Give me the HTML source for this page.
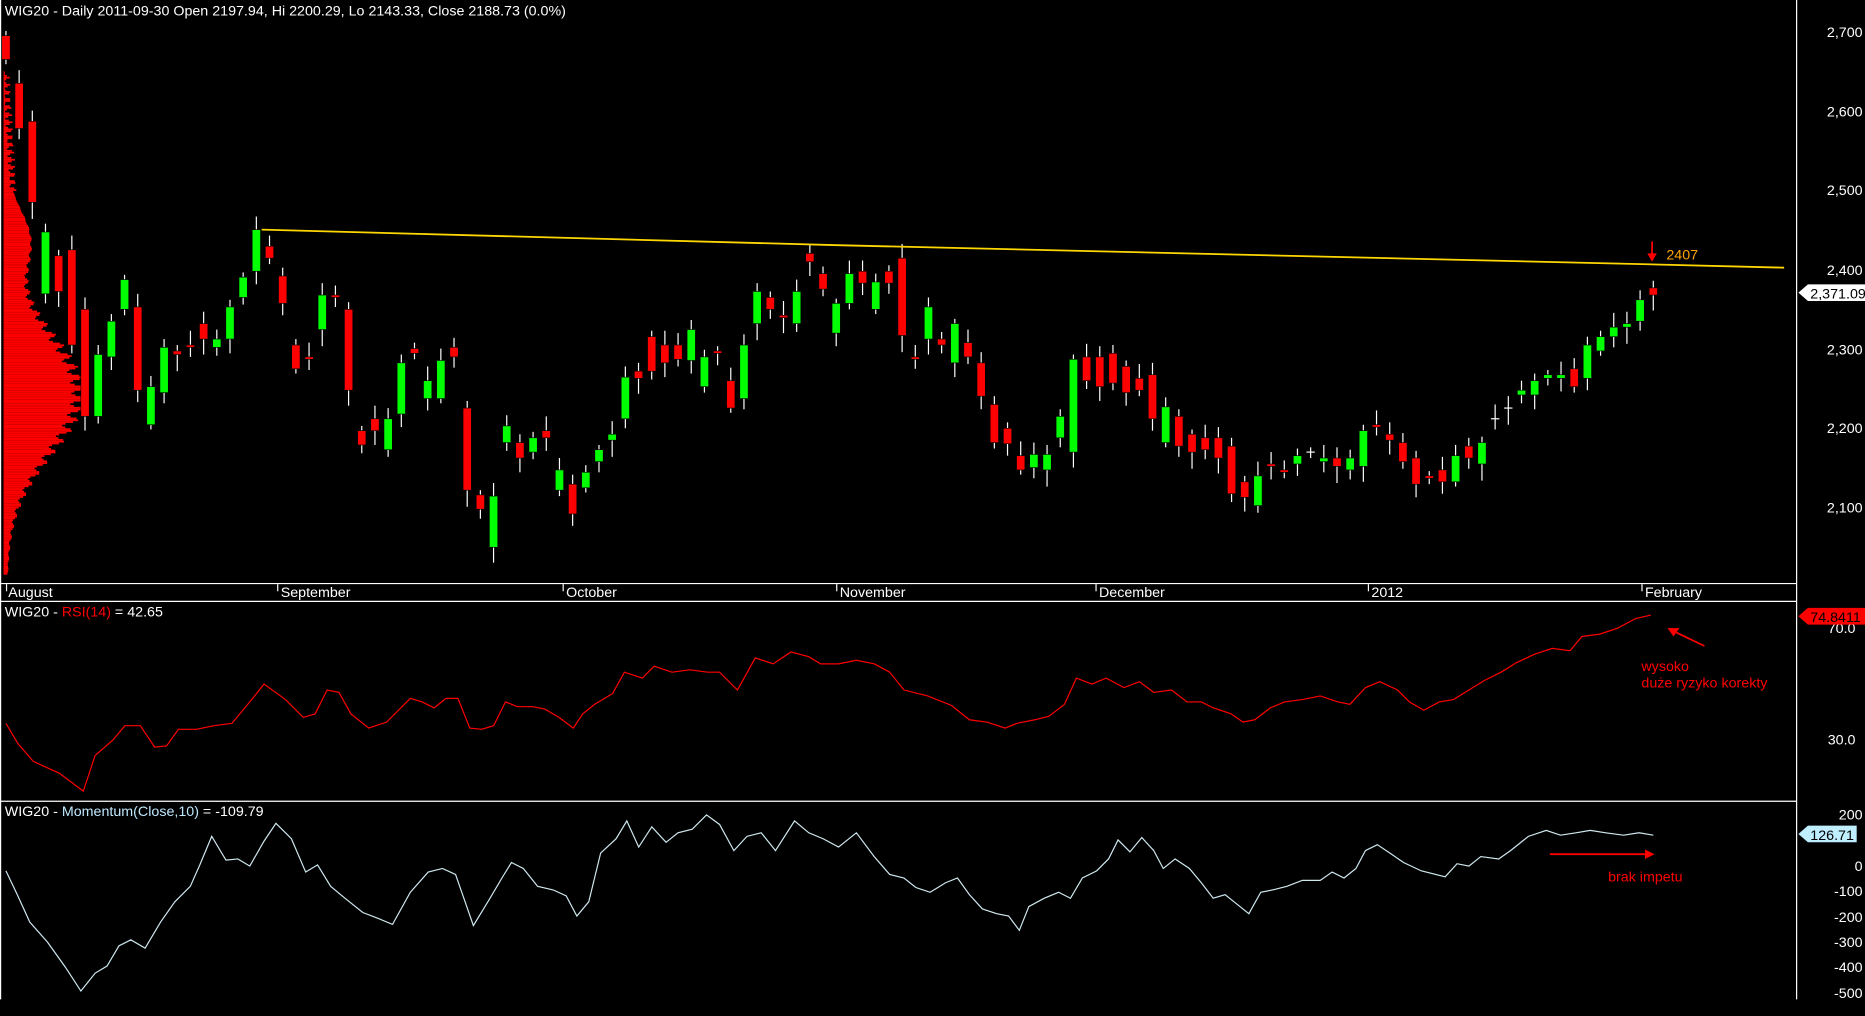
<!DOCTYPE html>
<html><head><meta charset="utf-8"><style>
html,body{margin:0;padding:0;background:#000;overflow:hidden}
svg{display:block}
text{font-family:"Liberation Sans",Arial,sans-serif;font-size:12px}
</style></head><body>
<svg id="s" width="1865" height="1016" viewBox="0 0 1568 854" preserveAspectRatio="none" xmlns="http://www.w3.org/2000/svg">
<rect width="1568" height="854" fill="#000"/>
<g id="vp"></g>
<g id="cd"></g>
<!-- frames -->
<g stroke="#fff" stroke-width="1" fill="none">
<line x1="0.5" y1="0" x2="0.5" y2="840"/>
<line x1="1510.5" y1="0" x2="1510.5" y2="840"/>
<line x1="0" y1="490.5" x2="1510" y2="490.5"/>
<line x1="0" y1="505.5" x2="1510" y2="505.5"/>
<line x1="0" y1="673.5" x2="1510" y2="673.5"/>
<line x1="5.5" y1="491" x2="5.5" y2="497"/>
<line x1="233.5" y1="491" x2="233.5" y2="497"/>
<line x1="473.5" y1="491" x2="473.5" y2="497"/>
<line x1="703.5" y1="491" x2="703.5" y2="497"/>
<line x1="921.5" y1="491" x2="921.5" y2="497"/>
<line x1="1150.5" y1="491" x2="1150.5" y2="497"/>
<line x1="1380.5" y1="491" x2="1380.5" y2="497"/>
</g>
<g fill="#fff">
<text x="7" y="502">August</text>
<text x="236" y="502">September</text>
<text x="476" y="502">October</text>
<text x="706" y="502">November</text>
<text x="924" y="502">December</text>
<text x="1153" y="502">2012</text>
<text x="1383" y="502">February</text>
<text x="4" y="13">WIG20 - Daily 2011-09-30 Open 2197.94, Hi 2200.29, Lo 2143.33, Close 2188.73 (0.0%)</text>
<text x="4" y="518">WIG20 - <tspan fill="#f00">RSI(14)</tspan> = 42.65</text>
<text x="4" y="686">WIG20 - <tspan fill="#bfe8ff">Momentum(Close,10)</tspan> = -109.79</text>
</g>
<g fill="#fff" text-anchor="end">
<text x="1566" y="31">2,700</text>
<text x="1566" y="98">2,600</text>
<text x="1566" y="164">2,500</text>
<text x="1566" y="231">2,400</text>
<text x="1566" y="298">2,300</text>
<text x="1566" y="364">2,200</text>
<text x="1566" y="431">2,100</text>
<text x="1560" y="532">70.0</text>
<text x="1560" y="626">30.0</text>
<text x="1566" y="689">200</text>
<text x="1566" y="732">0</text>
<text x="1566" y="753">-100</text>
<text x="1566" y="775">-200</text>
<text x="1566" y="796">-300</text>
<text x="1566" y="817">-400</text>
<text x="1566" y="839">-500</text>
</g>
<!-- trend line -->
<polyline points="220,193 700,206 1380,222 1500,225" fill="none" stroke="#ffd700" stroke-width="1.5"/>
<text x="1401" y="218" fill="#ffa500">2407</text>
<line x1="1389" y1="203" x2="1389" y2="215" stroke="#f00" stroke-width="1.5"/>
<polygon points="1385,213 1393,213 1389,220" fill="#f00"/>
<!-- price tags -->
<polygon points="1512,246 1520,239 1568,239 1568,253 1520,253" fill="#fff"/>
<text x="1522" y="251" fill="#000">2,371.09</text>
<polygon points="1512,518 1520,511 1568,511 1568,525 1520,525" fill="#f00"/>
<text x="1522" y="523" fill="#000">74.8411</text>
<polygon points="1512,701 1520,694 1561,694 1561,708 1520,708" fill="#bfeeff"/>
<text x="1522" y="706" fill="#000">126.71</text>
<!-- RSI -->
<polyline fill="none" stroke="#f00" stroke-width="1" points="5,608 15,625 28,640 50,650 70,665 80,635 95,622 105,610 118,610 130,628 140,627 150,613 165,613 180,610 195,608 210,590 222,575 240,588 255,603 265,600 275,580 285,582 295,600 310,612 325,607 345,587 355,590 365,595 375,587 385,587 395,612 405,613 415,610 425,590 435,594 448,594 458,596 470,603 482,612 490,600 500,592 515,583 525,565 540,570 550,560 565,565 580,563 595,565 605,565 620,580 635,553 650,558 665,548 680,552 690,558 705,558 720,555 735,558 748,565 760,580 780,585 800,593 815,605 830,607 845,612 855,608 870,605 882,602 895,592 905,570 918,575 930,570 945,578 958,573 970,582 985,580 998,590 1010,590 1020,595 1035,600 1045,607 1055,605 1068,595 1080,590 1095,588 1110,585 1125,590 1135,592 1148,578 1160,573 1175,580 1185,590 1197,597 1210,590 1222,588 1235,580 1248,572 1262,565 1275,557 1290,550 1305,545 1320,547 1330,535 1345,533 1360,528 1375,520 1388,517"/>
<text x="1380" y="564" fill="#f00">wysoko</text>
<text x="1380" y="578" fill="#f00">duże ryzyko korekty</text>
<line x1="1433" y1="543" x2="1408" y2="531" stroke="#f00" stroke-width="1.5"/>
<polygon points="1402,528 1412,528 1407,535" fill="#f00"/>
<!-- Momentum -->
<polyline fill="none" stroke="#cfe8f0" stroke-width="1" points="5,732 15,753 25,775 40,792 55,813 68,833 80,818 90,812 100,795 110,790 122,797 135,775 147,758 160,745 168,727 178,703 190,723 200,722 210,728 222,707 232,692 245,705 257,733 267,727 278,745 290,755 305,767 318,772 330,777 345,750 360,733 372,730 383,735 398,778 412,755 422,738 430,725 440,730 452,745 465,748 476,753 485,770 495,758 505,717 518,705 527,690 537,712 548,695 560,708 570,700 582,697 594,685 605,693 617,715 628,703 640,700 652,715 668,690 680,700 692,705 705,712 720,700 735,720 748,735 760,738 770,746 782,750 795,742 805,738 815,752 826,764 838,768 848,770 857,782 865,762 878,755 890,750 900,755 910,738 922,732 932,722 940,706 950,716 960,704 970,715 978,730 988,722 1000,730 1010,742 1020,755 1030,752 1040,760 1050,768 1060,750 1070,748 1082,745 1095,740 1110,740 1120,733 1130,738 1140,730 1148,715 1158,710 1170,718 1180,725 1195,732 1215,737 1225,726 1235,728 1245,720 1260,722 1270,715 1285,703 1300,698 1312,702 1325,700 1337,698 1350,700 1365,702 1378,700 1390,702"/>
<line x1="1303" y1="718" x2="1384" y2="718" stroke="#f00" stroke-width="1.5"/>
<polygon points="1383,714 1391,718 1383,722" fill="#f00"/>
<text x="1352" y="741" fill="#f00">brak impetu</text>
</svg>
<script>
var NS="http://www.w3.org/2000/svg";
var d=[[30,50],[70,108],[102,170],[247,195],[215,245],[210,290],[260,350],[350,298],[300,270],[260,235],[258,328],[357,325],[330,292],[295,298],[290,292],[272,285],[292,285],[285,258],[250,233],[228,193],
[207,217],[232,255],[290,310],[300,302],[277,248],[248,250],[260,328],[362,374],[352,362],[378,352],[348,305],[293,297],[335,320],[335,303],[292,300],[343,412],[416,428],[460,417],[372,358],[372,385],[380,368],[362,368],
[412,395],[407,432],[410,397],[388,378],[370,365],[352,317],[312,318],[283,312],[290,305],[290,302],[303,277],[325,300],[295,297],[320,343],[335,290],[272,245],[250,260],[265,267],[272,245],[213,220],[230,243],
[280,255],[255,230],[228,238],[260,237],[228,238],[217,282],[300,302],[285,258],[285,290],[305,272],[288,300],[305,333],[340,372],[360,373],[383,395],[393,382],[395,382],[368,350],[380,302],[300,320],
[300,325],[297,322],[308,330],[318,328],[315,352],[372,342],[350,375],[365,380],[368,378],[368,385],[375,415],[405,418],[425,400],[390,392],[395,397],[390,383],[380,381],[388,385],[385,392],[395,385],[392,362],[357,359],
[365,370],[372,388],[385,407],[400,402],[395,405],[405,383],[375,385],[390,372],[352,353],[343,344],[332,328],[332,320],[318,315],[318,315],[310,325],[318,290],[295,283],[283,275],[275,272],[270,252],[242,248]];
var g=document.getElementById('cd'),N=d.length,h='';
for(var i=0;i<N;i++){var x=5+i*(1385/(N-1)),o=d[i][0],c=d[i][1],t=Math.min(o,c),b=Math.max(o,c);
var wt=t-4-((i*7)%9),wb=b+4+((i*5)%11);
h+='<line x1="'+x+'" x2="'+x+'" y1="'+wt+'" y2="'+wb+'" stroke="#fff" stroke-width="1"/>';
var col=c<o?'#00ff00':'#ff0000';if(b-t<2){h+='<line x1="'+(x-3.5)+'" x2="'+(x+3.5)+'" y1="'+t+'" y2="'+t+'" stroke="#fff"/>';}
else h+='<rect x="'+(x-3.5)+'" y="'+t+'" width="7" height="'+(b-t)+'" fill="'+col+'" stroke="#000" stroke-width="0.5"/>';}
g.innerHTML=h;
var v='';for(var y=60;y<482;y+=1.5){var w=3+60*Math.exp(-Math.pow((y-330)/70,2))+18*Math.exp(-Math.pow((y-200)/35,2))+6*Math.sin(y*0.7)*Math.exp(-Math.pow((y-330)/90,2));
if(y<160)w=2+6*(y-60)/100+3*Math.sin(y);v+='<rect x="3" y="'+y+'" width="'+Math.max(1,w)+'" height="1.5" fill="#f00"/>';}
document.getElementById('vp').innerHTML=v;
</script>
</body></html>
